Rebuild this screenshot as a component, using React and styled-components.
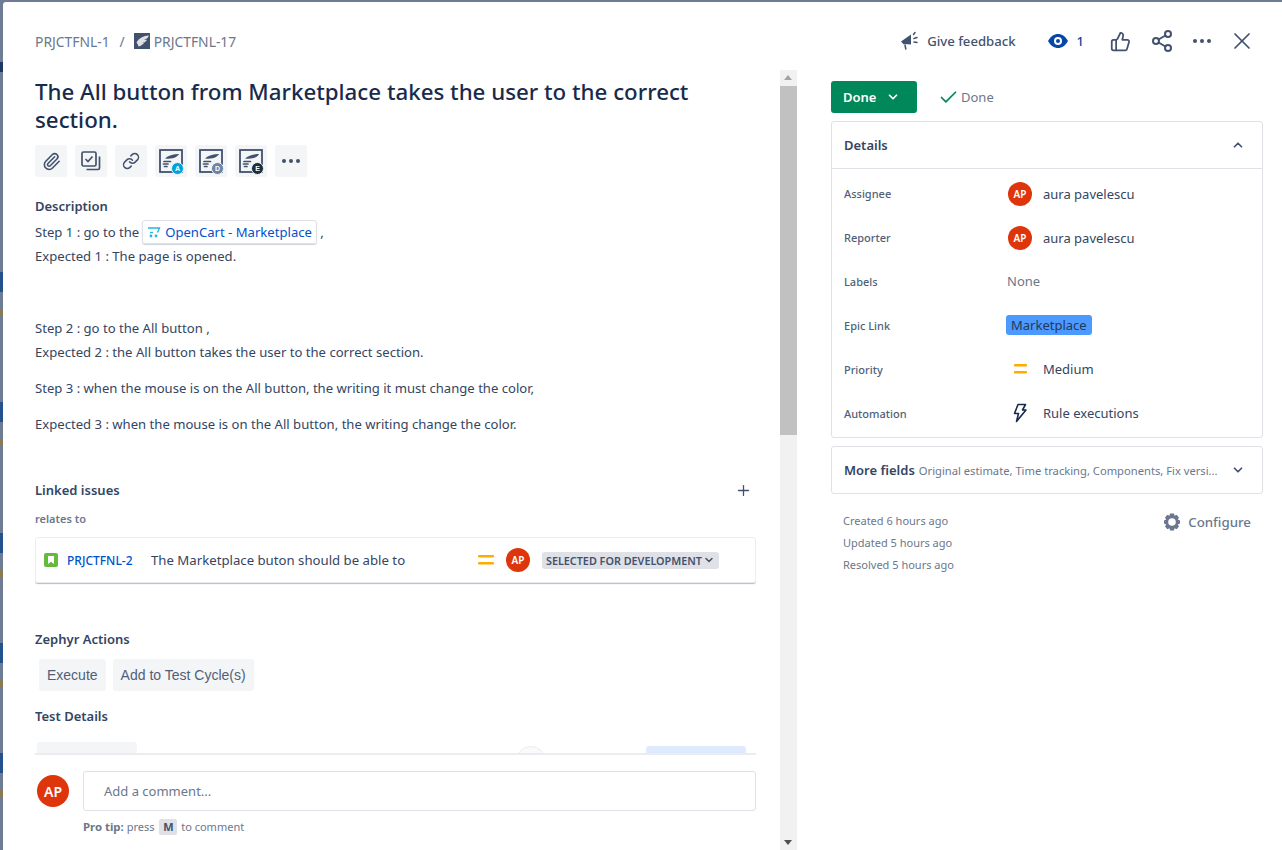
import styled, { createGlobalStyle } from 'styled-components';
import { Paperclip, Link as LinkIcon, Share2, ThumbsUp, X, Plus, ChevronDown, ChevronUp, Check } from 'lucide-react';

const FONT = '"Noto Sans", "Open Sans", sans-serif';

const Global = createGlobalStyle`
    html, body { margin: 0; padding: 0; height: 100%; overflow: hidden; }
    body { font-family: ${FONT}; font-size: 13px; color: #172b4d; background: #6f7d94; }
    * { box-sizing: border-box; }
`;

const Overlay = styled.div`
    width: 1282px;
    height: 850px;
    padding: 2px 0 0 3px;
    overflow: hidden;
    background: linear-gradient(to bottom,
        #6f7d94 0 62px, #1c3766 62px 72px, #6f7d94 72px 272px,
        #24528f 272px 292px, #6f7d94 292px 309px, #8a7a55 309px 316px, #6f7d94 316px 402px,
        #24528f 402px 422px, #6f7d94 422px 439px, #8a7a55 439px 446px, #6f7d94 446px 533px,
        #24528f 533px 553px, #6f7d94 553px 570px, #8a7a55 570px 577px, #6f7d94 577px 643px,
        #24528f 643px 663px, #6f7d94 663px 680px, #8a7a55 680px 687px, #6f7d94 687px 753px,
        #24528f 753px 773px, #6f7d94 773px 790px, #8a7a55 790px 797px, #6f7d94 797px);
`;

const Modal = styled.div`
    width: 1279px;
    height: 848px;
    background: #fff;
    border-top-left-radius: 3px;
    display: flex;
    flex-direction: column;
`;

const Header = styled.header`
    height: 68px;
    flex: none;
    display: flex;
    align-items: center;
    justify-content: space-between;
    padding: 10px 26px 0 32px;
`;

const Crumbs = styled.div`
    display: flex;
    align-items: center;
    color: #6b778c;
    font-size: 13.85px;
`;

const CrumbSlash = styled.span`
    margin: 0 9px 0 10px;
`;

const IssueType = styled.svg`
    width: 16px;
    height: 16px;
    margin-right: 4px;
`;

const HeaderActions = styled.div`
    display: flex;
    align-items: center;
    color: #42526e;
`;

const Feedback = styled.span`
    display: flex;
    align-items: center;
    gap: 7px;
    font-weight: 500;
    font-size: 13.15px;
    color: #42526e;
    margin-right: 32px;
`;

const Watchers = styled.span`
    display: flex;
    align-items: center;
    gap: 9px;
    color: #0747a6;
    font-weight: 500;
    margin-right: 26px;
`;

const HeaderIcon = styled.span`
    display: flex;
    margin-right: ${p => p.$gap ?? 19}px;
`;

const Body = styled.div`
    flex: 1;
    min-height: 0;
    display: flex;
    padding-left: 32px;
`;

const Main = styled.main`
    width: 721px;
    display: flex;
    flex-direction: column;
    flex: none;
`;

const Scroll = styled.div`
    height: 683px;
    flex: none;
    overflow: hidden;
`;

const Title = styled.h1`
    margin: 8px 0 11px;
    max-width: 680px;
    font-size: 22.3px;
    line-height: 28px;
    font-weight: 500;
    color: #172b4d;
`;

const IconRow = styled.div`
    display: flex;
    gap: 8px;
    margin-bottom: 19px;
`;

const IconButton = styled.button`
    position: relative;
    width: 32px;
    height: 32px;
    padding: 0;
    border: 0;
    border-radius: 3px;
    background: #f4f5f7;
    color: #42526e;
    display: flex;
    align-items: center;
    justify-content: center;
`;

const Badge = styled.span`
    position: absolute;
    right: 3px;
    bottom: 2px;
    width: 13px;
    height: 13px;
    border-radius: 50%;
    background: ${p => p.$bg};
    color: #fff;
    border: 1px solid #f4f5f7;
    font-size: 7px;
    font-weight: 700;
    line-height: 11px;
    text-align: center;
`;

const SectionHead = styled.h2`
    margin: 0;
    font-size: 13px;
    line-height: 20px;
    font-weight: 600;
    color: #344563;
`;

const Line = styled.p`
    margin: ${p => p.$top ?? 0}px 0 0;
    font-size: 13.1px;
    line-height: 24px;
    color: #344563;
    display: flex;
    align-items: center;
    white-space: pre;
`;

const SmartLink = styled.span`
    display: inline-flex;
    align-items: center;
    gap: 4px;
    height: 24px;
    margin: 0 0 0 3px;
    padding: 0 4px;
    border: 1px solid #dfe1e6;
    border-radius: 3px;
    box-shadow: 0 1px 1px rgba(9, 30, 66, 0.2);
    color: #0052cc;
`;

const LinkedHead = styled.div`
    display: flex;
    align-items: center;
    justify-content: space-between;
    margin-top: 44px;
    padding-right: 4px;
    color: #42526e;
`;

const RelatesTo = styled.div`
    margin-top: 10px;
    font-size: 11px;
    font-weight: 600;
    line-height: 18px;
    color: #6b778c;
`;

const IssueCard = styled.div`
    margin-top: 9px;
    height: 46px;
    display: flex;
    align-items: center;
    padding: 0 36px 0 8px;
    border: 1px solid #ebecf0;
    border-radius: 3px;
    box-shadow: 0 1px 1px rgba(9, 30, 66, 0.3);
`;

const StoryIcon = styled.svg`
    width: 14px;
    height: 14px;
    flex: none;
`;

const IssueKey = styled.span`
    margin-left: 9px;
    width: 84px;
    font-size: 12px;
    color: #0052cc;
    font-weight: 500;
`;

const Summary = styled.span`
    flex: 1;
    color: #344563;
    font-size: 13.2px;
`;

const Priority = styled.svg`
    width: ${p => p.$w}px;
    height: 10px;
    flex: none;
    margin: ${p => p.$margin};
`;

const Avatar = styled.span`
    width: ${p => p.$size}px;
    height: ${p => p.$size}px;
    flex: none;
    border-radius: 50%;
    background: #de350b;
    color: #fff;
    font-size: ${p => (p.$size > 24 ? 14 : 10)}px;
    font-weight: 600;
    display: flex;
    align-items: center;
    justify-content: center;
`;

const Lozenge = styled.span`
    margin-left: 12px;
    height: 17px;
    display: flex;
    align-items: center;
    gap: 1px;
    padding: 0 4px;
    border-radius: 3px;
    background: #dfe1e6;
    color: #42526e;
    font-size: 10.8px;
    font-weight: 600;
    white-space: nowrap;
`;

const ZephyrHead = styled(SectionHead)`
    margin-top: 46px;
`;

const ZephyrActions = styled.div`
    display: flex;
    gap: 7px;
    margin: 10px 0 15px 4px;
`;

const ZephyrButton = styled.button`
    height: 32px;
    padding: 0 8px;
    border: 0;
    border-radius: 3px;
    background: #f4f5f7;
    color: #505f79;
    font: 14px "Liberation Sans", Arial, sans-serif;
`;

const TestTabs = styled.div`
    margin-top: 16px;
    height: 11px;
    display: flex;
    align-items: flex-end;
    overflow: hidden;
    padding-left: 2px;
`;

const TestTab = styled.span`
    width: 100px;
    height: 11px;
    flex: none;
    background: #f4f5f7;
    border-radius: 3px 3px 0 0;
`;

const TestCircle = styled.span`
    width: 30px;
    height: 30px;
    flex: none;
    margin: 0 0 -23px 379px;
    border-radius: 50%;
    background: #f9fafb;
    border: 1px solid #ebecf0;
`;

const TestBlue = styled.span`
    width: 100px;
    height: 7px;
    flex: none;
    margin-left: 100px;
    background: #deebff;
    border-radius: 3px 3px 0 0;
`;

const CommentBar = styled.div`
    flex: 1;
    border-top: 2px solid #ebecf0;
    display: grid;
    grid-template-columns: 48px 1fr;
    grid-template-rows: 40px auto;
    align-content: start;
    row-gap: 7px;
    padding-top: 16px;
`;

const CommentAvatar = styled.div`
    padding: 4px 0 0 2px;
`;

const CommentInput = styled.div`
    border: 1px solid #dfe1e6;
    border-radius: 3px;
    display: flex;
    align-items: center;
    padding-left: 20px;
    color: #6b778c;
    font-size: 13px;
`;

const ProTip = styled.div`
    grid-column: 2;
    display: flex;
    align-items: center;
    font-size: 11px;
    line-height: 18px;
    color: #6b778c;
    white-space: pre;

    b {
        font-size: 11.4px;
    }
`;

const KeyCap = styled.span`
    margin: 0 1px 0 2px;
    width: 18px;
    height: 16px;
    border-radius: 2px;
    background: #dfe1e6;
    color: #42526e;
    font-weight: 700;
    display: flex;
    align-items: center;
    justify-content: center;
`;

const Scrollbar = styled.div`
    width: 17px;
    flex: none;
    margin-left: 24px;
    padding: 16px 0;
    position: relative;
    background: #f1f1f1;
`;

const ScrollThumb = styled.div`
    width: 100%;
    height: 349px;
    background: #c1c1c1;
`;

const ScrollArrow = styled.span`
    position: absolute;
    left: 4px;
    ${p => (p.$down ? 'bottom: 5px; border-top: 5px solid #505050;' : 'top: 5px; border-bottom: 5px solid #a3a3a3;')}
    border-left: 4.5px solid transparent;
    border-right: 4.5px solid transparent;
`;

const Side = styled.aside`
    width: 432px;
    margin-left: 34px;
    flex: none;
    display: flex;
    flex-direction: column;
`;

const StatusRow = styled.div`
    display: flex;
    align-items: center;
    margin: 11px 0 8px;
`;

const StatusButton = styled.button`
    width: 86px;
    height: 32px;
    padding: 0 17px 0 12px;
    border: 0;
    border-radius: 3px;
    background: #00875a;
    color: #fff;
    font: 600 13px ${FONT};
    display: flex;
    align-items: center;
    justify-content: space-between;
`;

const Resolution = styled.span`
    margin-left: 21px;
    display: flex;
    align-items: center;
    gap: 2px;
    color: #6b778c;
`;

const Panel = styled.section`
    border: 1px solid #dfe1e6;
    border-radius: 3px;
`;

const PanelHead = styled.div`
    height: ${p => (p.$open ? 47 : 46)}px;
    display: flex;
    align-items: center;
    justify-content: space-between;
    padding: 0 17px 0 12px;
    color: #42526e;
    border-bottom: ${p => (p.$open ? '1px solid #dfe1e6' : '0')};
`;

const PanelTitle = styled.span`
    font-size: 13px;
    font-weight: 600;
    color: #344563;
    white-space: nowrap;
`;

const Fields = styled.div`
    padding: 3px 0 1px;
`;

const Field = styled.div`
    height: 44px;
    display: grid;
    grid-template-columns: 164px 1fr;
    align-items: center;
    padding-left: 12px;
`;

const FieldLabel = styled.span`
    margin-top: -2px;
    font-size: 11px;
    font-weight: 500;
    color: #505f79;
`;

const FieldValue = styled.span`
    display: flex;
    align-items: center;
    gap: 11px;
    font-size: 13px;
    color: ${p => p.$muted ? '#6b778c' : '#344563'};
    margin: ${p => p.$lift ? '-2px' : '0'} 0 0 ${p => p.$muted ? '-1px' : '0'};
`;

const EpicTag = styled.span`
    margin: 0 0 0 -2px;
    height: 20px;
    padding: 0 5px;
    display: flex;
    align-items: center;
    border-radius: 3px;
    background: #4c9aff;
    color: #253858;
`;

const IconSlot = styled.span`
    width: 24px;
    flex: none;
    display: flex;
    justify-content: center;
`;

const MorePanel = styled(Panel)`
    margin-top: 8px;
`;

const MoreHint = styled.span`
    flex: 1;
    margin-left: 4px;
    min-width: 0;
    font-size: 11.2px;
    color: #6b778c;
    white-space: nowrap;
`;

const MoreChevron = styled(ChevronDown)`
    margin-left: 12px;
    flex: none;
`;

const Footer = styled.div`
    display: flex;
    justify-content: space-between;
    padding: 16px 12px 0 12px;
`;

const Stamps = styled.div`
    font-size: 11px;
    line-height: 22px;
    color: #6b778c;
`;

const Configure = styled.span`
    height: 24px;
    display: flex;
    align-items: center;
    gap: 7px;
    font-size: 13.3px;
    font-weight: 500;
    color: #6b778c;
`;

const Wing = () => (
    <g fill="none" strokeLinecap="round">
        <path d="M6 9.500C9 6.500 14 5 20 5c-1.500 3-6 5.500-14 4.500z" fill="#42526e" />
        <path d="M5 12.500h6.500M4.500 15h4.500M5.500 17.500h2.500" stroke="#42526e" strokeWidth="1.7" />
    </g>
);

const ZephyrIcon = ({ letter, bg }) => (
    <IconButton>
        <svg width="24" height="24" viewBox="0 0 24 24">
            <rect x="1" y="1" width="22" height="22" fill="none" stroke="#42526e" strokeWidth="1.8" />
            <Wing />
        </svg>
        <Badge $bg={bg}>{letter}</Badge>
    </IconButton>
);

const EqualIcon = ({ w, margin }) => (
    <Priority $w={w} $margin={margin} viewBox="0 0 16 10" preserveAspectRatio="none">
        <rect x="0" y="0" width="16" height="2.4" rx="1" fill="#ffab00" />
        <rect x="0" y="7" width="16" height="2.4" rx="1" fill="#ffab00" />
    </Priority>
);

const Dots = () => (
    <svg width="18" height="4" viewBox="0 0 18 4" fill="#42526e">
        <circle cx="2" cy="2" r="2" /><circle cx="9" cy="2" r="2" /><circle cx="16" cy="2" r="2" />
    </svg>
);

const FIELDS = [
    { label: 'Assignee', kind: 'user', text: 'aura pavelescu' },
    { label: 'Reporter', kind: 'user', text: 'aura pavelescu' },
    { label: 'Labels', kind: 'none', text: 'None' },
    { label: 'Epic Link', kind: 'epic', text: 'Marketplace' },
    { label: 'Priority', kind: 'priority', text: 'Medium' },
    { label: 'Automation', kind: 'bolt', text: 'Rule executions' },
];

function fieldIcon(kind) {
    if (kind === 'user') return <Avatar $size={24}>AP</Avatar>;
    if (kind === 'priority') return <IconSlot><EqualIcon w={13} margin="0" /></IconSlot>;
    if (kind === 'bolt') return (
        <IconSlot>
            <svg width="16" height="20" viewBox="0 0 16 20">
                <path d="M6 1.500h7.500L10.500 7H14L4.500 18.500 6.500 10.500H2.500z" fill="none" stroke="#172b4d" strokeWidth="1.6" strokeLinejoin="round" />
            </svg>
        </IconSlot>
    );
    return null;
}

export default function App() {
    return (
        <Overlay>
            <Global />
            <Modal>
                <Header>
                    <Crumbs>
                        PRJCTFNL-1
                        <CrumbSlash>/</CrumbSlash>
                        <IssueType viewBox="0 0 16 16">
                            <rect width="16" height="16" fill="#42526e" />
                            <path d="M2.500 9.500C5 5 9.500 2.800 15 2.500c-.8 2.300-2.500 3.800-5 4.500 1 .1 2 0 3-.3-1 2-3 3.300-5.300 3.300l2.300-.1c-1 1.500-3 2.800-5.500 3.600-.2-1.400-1-2.800-2-4z" fill="#dfe1e6" />
                        </IssueType>
                        PRJCTFNL-17
                    </Crumbs>
                    <HeaderActions>
                        <Feedback>
                            <svg width="20" height="20" viewBox="0 0 20 20">
                                <path d="M1 10.500 11 3.500v10L4.500 13l-1 .3z" fill="#42526e" />
                                <path d="M5 14l.8 4M13.500 3.500l1.500-2M14 7.500l3-1M14 11l3 .5" stroke="#42526e" strokeWidth="1.500" strokeLinecap="round" fill="none" />
                            </svg>
                            Give feedback
                        </Feedback>
                        <Watchers>
                            <svg width="20" height="14" viewBox="0 0 20 14">
                                <path d="M0 7c2.500-4.500 6-7 10-7s7.500 2.500 10 7c-2.500 4.500-6 7-10 7S2.500 11.500 0 7z" fill="#0747a6" />
                                <circle cx="10" cy="7" r="4" fill="#fff" />
                                <circle cx="10" cy="7" r="2" fill="#0747a6" />
                            </svg>
                            1
                        </Watchers>
                        <HeaderIcon><ThumbsUp size={21} strokeWidth={2} /></HeaderIcon>
                        <HeaderIcon><Share2 size={24} strokeWidth={2} /></HeaderIcon>
                        <HeaderIcon $gap={17}><Dots /></HeaderIcon>
                        <HeaderIcon $gap={0}><X size={28} strokeWidth={1.500} /></HeaderIcon>
                    </HeaderActions>
                </Header>
                <Body>
                    <Main>
                        <Scroll>
                            <Title>The All button from Marketplace takes the user to the correct section.</Title>
                            <IconRow>
                                <IconButton><Paperclip size={19} strokeWidth={2} /></IconButton>
                                <IconButton>
                                    <svg width="20" height="20" viewBox="0 0 20 20" fill="none" stroke="#42526e" strokeWidth="1.700">
                                        <rect x="1" y="1" width="14" height="14" rx="1.500" />
                                        <path d="M4.500 8l2.500 2.500 4.500-5" />
                                        <path d="M18.500 5.500V17a1.500 1.500 0 01-1.500 1.500H5.500" />
                                    </svg>
                                </IconButton>
                                <IconButton><LinkIcon size={18} strokeWidth={2} /></IconButton>
                                <ZephyrIcon letter="A" bg="#00a3d9" />
                                <ZephyrIcon letter="D" bg="#6b83a5" />
                                <ZephyrIcon letter="E" bg="#172f3f" />
                                <IconButton><Dots /></IconButton>
                            </IconRow>
                            <SectionHead>Description</SectionHead>
                            <Line $top={4}>
                                Step 1 : go to the
                                <SmartLink>
                                    <svg width="14" height="12" viewBox="0 0 14 12" fill="none" stroke="#26b5e0" strokeWidth="1.400">
                                        <path d="M1 2h11.500l-2 4.500" />
                                        <path d="M3 6.500h3" />
                                        <circle cx="4" cy="10" r=".7" fill="#26b5e0" />
                                        <circle cx="9" cy="10" r=".7" fill="#26b5e0" />
                                    </svg>
                                    OpenCart - Marketplace
                                </SmartLink>
                                {' ,'}
                            </Line>
                            <Line>Expected 1 : The page is opened.</Line>
                            <Line $top={48}>Step 2 : go to the All button ,</Line>
                            <Line>Expected 2 : the All button takes the user to the correct section.</Line>
                            <Line $top={12}>Step 3 : when the mouse is on the All button, the writing it must change the color,</Line>
                            <Line $top={12}>Expected 3 : when the mouse is on the All button, the writing change the color.</Line>
                            <LinkedHead>
                                <SectionHead>Linked issues</SectionHead>
                                <Plus size={17} strokeWidth={1.800} />
                            </LinkedHead>
                            <RelatesTo>relates to</RelatesTo>
                            <IssueCard>
                                <StoryIcon viewBox="0 0 14 14">
                                    <rect width="14" height="14" rx="2" fill="#63ba3c" />
                                    <path d="M4 3h6v8L7 8.800 4 11z" fill="#fff" />
                                </StoryIcon>
                                <IssueKey>PRJCTFNL-2</IssueKey>
                                <Summary>The Marketplace buton should be able to</Summary>
                                <EqualIcon w={16} margin="0 12px 0 0" />
                                <Avatar $size={24}>AP</Avatar>
                                <Lozenge>
                                    SELECTED FOR DEVELOPMENT
                                    <ChevronDown size={12} strokeWidth={3} />
                                </Lozenge>
                            </IssueCard>
                            <ZephyrHead>Zephyr Actions</ZephyrHead>
                            <ZephyrActions>
                                <ZephyrButton>Execute</ZephyrButton>
                                <ZephyrButton>Add to Test Cycle(s)</ZephyrButton>
                            </ZephyrActions>
                            <SectionHead>Test Details</SectionHead>
                            <TestTabs>
                                <TestTab />
                                <TestCircle />
                                <TestBlue />
                            </TestTabs>
                        </Scroll>
                        <CommentBar>
                            <CommentAvatar><Avatar $size={32}>AP</Avatar></CommentAvatar>
                            <CommentInput>Add a comment...</CommentInput>
                            <ProTip>
                                <b>Pro tip:</b> press <KeyCap>M</KeyCap> to comment
                            </ProTip>
                        </CommentBar>
                    </Main>
                    <Scrollbar>
                        <ScrollArrow />
                        <ScrollThumb />
                        <ScrollArrow $down />
                    </Scrollbar>
                    <Side>
                        <StatusRow>
                            <StatusButton>Done <ChevronDown size={14} strokeWidth={3} /></StatusButton>
                            <Resolution>
                                <Check size={21} strokeWidth={2} color="#00875a" />
                                Done
                            </Resolution>
                        </StatusRow>
                        <Panel>
                            <PanelHead $open>
                                <PanelTitle>Details</PanelTitle>
                                <ChevronUp size={14} strokeWidth={3} />
                            </PanelHead>
                            <Fields>
                                {FIELDS.map(f => (
                                    <Field key={f.label}>
                                        <FieldLabel>{f.label}</FieldLabel>
                                        <FieldValue $muted={f.kind === 'none'} $lift={f.kind !== 'user'}>
                                            {fieldIcon(f.kind)}
                                            {f.kind === 'epic' ? <EpicTag>{f.text}</EpicTag> : f.text}
                                        </FieldValue>
                                    </Field>
                                ))}
                            </Fields>
                        </Panel>
                        <MorePanel>
                            <PanelHead>
                                <PanelTitle>More fields</PanelTitle>
                                <MoreHint>Original estimate, Time tracking, Components, Fix versi...</MoreHint>
                                <MoreChevron size={14} strokeWidth={3} />
                            </PanelHead>
                        </MorePanel>
                        <Footer>
                            <Stamps>
                                <div>Created 6 hours ago</div>
                                <div>Updated 5 hours ago</div>
                                <div>Resolved 5 hours ago</div>
                            </Stamps>
                            <Configure>
                                <svg width="18" height="18" viewBox="0 0 18 18">
                                    <path d="M7 .5h4l.5 2.300 2.100-1 2.400 2.700-1.200 2L17 7.500v3l-2.200.9 1.200 2.100-2.400 2.700-2.100-1-.5 2.300H7l-.5-2.300-2.100 1L2 13.500l1.200-2.100L1 10.500v-3l2.200-1L2 4.500l2.400-2.700 2.100 1z" fill="#6b778c" />
                                    <circle cx="9" cy="9" r="3.800" fill="#fff" />
                                </svg>
                                Configure
                            </Configure>
                        </Footer>
                    </Side>
                </Body>
            </Modal>
        </Overlay>
    );
}
